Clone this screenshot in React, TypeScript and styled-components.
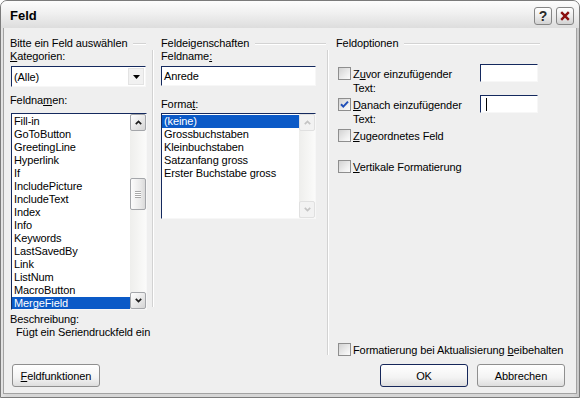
import { type ReactNode } from "react";
import styled, { createGlobalStyle } from "styled-components";

const uiFont = `"Liberation Sans", Arial, sans-serif`;

const GlobalStyle = createGlobalStyle`
  html, body {
    margin: 0;
    padding: 0;
    background: #ffffff;
  }
  body {
    font-family: ${uiFont};
    font-size: 11px;
    letter-spacing: -0.1px;
    color: #000000;
  }
`;

const fieldNames = [
  "Fill-in",
  "GoToButton",
  "GreetingLine",
  "Hyperlink",
  "If",
  "IncludePicture",
  "IncludeText",
  "Index",
  "Info",
  "Keywords",
  "LastSavedBy",
  "Link",
  "ListNum",
  "MacroButton",
  "MergeField"
];

const formats = [
  "(keine)",
  "Grossbuchstaben",
  "Kleinbuchstaben",
  "Satzanfang gross",
  "Erster Buchstabe gross"
];

function Chevron({ up, disabled }: { up: boolean; disabled?: boolean }) {
  return (
    <svg width="7" height="5" viewBox="0 0 7 5">
      <path
        d={up ? "M0.8 4.2 L3.5 1.4 L6.2 4.2" : "M0.8 0.8 L3.5 3.6 L6.2 0.8"}
        fill="none"
        stroke={disabled ? "#c4c4c4" : "#1e1e1e"}
        strokeWidth="1.7"
      />
    </svg>
  );
}

interface ListBoxProps {
  items: string[];
  selected: number;
  width: number;
  height: number;
  thumbTop?: number;
  thumbHeight?: number;
  disabled?: boolean;
}

function ListBox({ items, selected, width, height, thumbTop, thumbHeight, disabled }: ListBoxProps) {
  return (
    <ListFrame $width={width} $height={height}>
      <ListItems>
        {items.map((item, i) => (
          <ListItem key={item} $selected={i === selected}>
            {item}
          </ListItem>
        ))}
      </ListItems>
      <ScrollBar>
        <ScrollButton $disabled={disabled}>
          <Chevron up disabled={disabled} />
        </ScrollButton>
        <ScrollTrack>
          {!disabled && (
            <Thumb style={{ marginTop: thumbTop, height: thumbHeight }}>
              <Grip />
            </Thumb>
          )}
        </ScrollTrack>
        <ScrollButton $disabled={disabled}>
          <Chevron up={false} disabled={disabled} />
        </ScrollButton>
      </ScrollBar>
    </ListFrame>
  );
}

function CheckBox({ checked, offset }: { checked?: boolean; offset: number }) {
  return (
    <Box $offset={offset}>
      {checked && (
        <svg width="11" height="11" viewBox="0 0 11 11">
          <path d="M2 5.2 L4.3 7.6 L9 2.6" fill="none" stroke="#2150b8" strokeWidth="2" />
        </svg>
      )}
    </Box>
  );
}

function Option({ children, checked, field, caret }: {
  children: ReactNode;
  checked?: boolean;
  field?: boolean;
  caret?: boolean;
}) {
  const offset = field ? 3 : 0;
  return (
    <OptionRow>
      <CheckBox checked={checked} offset={offset} />
      <OptionLabel $fixed={field} $offset={offset}>
        {children}
      </OptionLabel>
      {field && <SmallField>{caret && <Caret />}</SmallField>}
    </OptionRow>
  );
}

function GroupHeader({ title, indent }: { title: string; indent: number }) {
  return (
    <GroupHead $indent={indent}>
      <span>{title}</span>
      <Rule />
    </GroupHead>
  );
}

export default function App() {
  return (
    <>
      <GlobalStyle />
      <Window>
        <TitleBar>
          <Title>Feld</Title>
          <CaptionButtons>
            <CaptionButton>?</CaptionButton>
            <CaptionButton>
              <svg width="10" height="10" viewBox="0 0 10 10">
                <path d="M1.2 1.2 L8.8 8.8 M8.8 1.2 L1.2 8.8" stroke="#8c0f0f" strokeWidth="2.4" />
              </svg>
            </CaptionButton>
          </CaptionButtons>
        </TitleBar>

        <Body>
          <Main>
            <LeftGroup>
              <GroupHeader title="Bitte ein Feld auswählen" indent={0} />
              <Label>
                <u>K</u>ategorien:
              </Label>
              <Combo>
                <ComboText>(Alle)</ComboText>
                <DropButton>
                  <svg width="7" height="4" viewBox="0 0 7 4">
                    <path d="M0 0 H7 L3.5 4 Z" fill="#000" />
                  </svg>
                </DropButton>
              </Combo>
              <Label $gap={7}>
                Feldna<u>m</u>en:
              </Label>
              <ListSlot $gap={6} $indent={1}>
                <ListBox items={fieldNames} selected={14} width={136} height={197} thumbTop={47} thumbHeight={32} />
              </ListSlot>
              <Label $gap={3}>Beschreibung:</Label>
              <Description>Fügt ein Seriendruckfeld ein</Description>
            </LeftGroup>

            <MidGroup>
              <GroupHeader title="Feldeigenschaften" indent={9} />
              <GroupBody $height={257} $pad={8}>
                <Label>
                  Feldname<u>:</u>
                </Label>
                <TextField>Anrede</TextField>
                <Label $gap={12}>
                  Forma<u>t</u>:
                </Label>
                <ListSlot $gap={2}>
                  <ListBox items={formats} selected={0} width={155} height={106} disabled />
                </ListSlot>
              </GroupBody>
            </MidGroup>

            <RightGroup>
              <GroupHeader title="Feldoptionen" indent={9} />
              <GroupBody $height={305} $pad={10}>
                <OptionList>
                  <Option field>
                    Z<u>u</u>vor einzufügender
                    <br />
                    Text:
                  </Option>
                  <Option field checked caret>
                    <u>D</u>anach einzufügender
                    <br />
                    Text:
                  </Option>
                  <Option>
                    <u>Z</u>ugeordnetes Feld
                  </Option>
                  <Option>
                    <u>V</u>ertikale Formatierung
                  </Option>
                </OptionList>
                <BottomOption>
                  <Option>
                    Formatierung bei Aktualisierung <u>b</u>eibehalten
                  </Option>
                </BottomOption>
              </GroupBody>
            </RightGroup>
          </Main>

          <Footer>
            <PushButton>
              <u>F</u>eldfunktionen
            </PushButton>
            <ButtonPair>
              <PushButton $default>OK</PushButton>
              <PushButton>Abbrechen</PushButton>
            </ButtonPair>
          </Footer>
        </Body>
      </Window>
    </>
  );
}

const Window = styled.div`
  width: 580px;
  height: 398px;
  box-sizing: border-box;
  display: flex;
  flex-direction: column;
  border: 1px solid #7b7b7b;
  border-radius: 7px 7px 0 0;
  background: linear-gradient(90deg, #e4e4e4, #d6d6d6 1%, #d6d6d6 99%, #c8c8c8);
  overflow: hidden;
`;

const TitleBar = styled.div`
  height: 27px;
  flex: none;
  display: flex;
  align-items: center;
  justify-content: space-between;
  padding: 0 5px 0 9px;
  background: linear-gradient(#fdfdfd, #f0f0f0 45%, #dddddd);
`;

const Title = styled.span`
  font-size: 13px;
  font-weight: bold;
  letter-spacing: 0;
  color: #000000;
  padding-top: 1px;
`;

const CaptionButtons = styled.div`
  display: flex;
  gap: 4px;
  padding-top: 2px;
`;

const CaptionButton = styled.div`
  width: 18px;
  height: 18px;
  box-sizing: border-box;
  display: flex;
  align-items: center;
  justify-content: center;
  border: 1px solid #858585;
  border-radius: 3px;
  background: linear-gradient(#ffffff, #ececec 50%, #d2d2d2);
  font-size: 14px;
  font-weight: bold;
  color: #2a2a2a;
`;

const Body = styled.div`
  flex: 1;
  display: flex;
  flex-direction: column;
  margin: 0 2px 3px 2px;
  border: 1px solid #a2a2a2;
  border-top: none;
  background: #efefef;
  padding: 8px 0 0 6px;
`;

const Main = styled.div`
  display: flex;
  height: 320px;
`;

const LeftGroup = styled.div`
  width: 137px;
  display: flex;
  flex-direction: column;
`;

const MidGroup = styled.div`
  width: 175px;
  margin-left: 5px;
  display: flex;
  flex-direction: column;
`;

const RightGroup = styled.div`
  width: 214px;
  display: flex;
  flex-direction: column;
`;

const GroupHead = styled.div<{ $indent: number }>`
  height: 14px;
  display: flex;
  align-items: center;
  padding-left: ${({ $indent }) => $indent}px;
  white-space: nowrap;
`;

const Rule = styled.div`
  flex: 1;
  height: 1px;
  margin: 1px 1px 0 6px;
  background: #d3d3d3;
  box-shadow: 0 1px 0 #ffffff;
`;

const GroupBody = styled.div<{ $height: number; $pad: number }>`
  height: ${({ $height }) => $height}px;
  display: flex;
  flex-direction: column;
  border-left: 1px solid #d2d2d2;
  box-shadow: inset 1px 0 0 #ffffff;
  padding-left: ${({ $pad }) => $pad}px;
`;

const Label = styled.div<{ $gap?: number }>`
  height: 13px;
  line-height: 13px;
  margin-top: ${({ $gap = 0 }) => $gap}px;
  white-space: nowrap;
`;

const Description = styled.div`
  height: 13px;
  line-height: 13px;
  padding-left: 6px;
  white-space: nowrap;
`;

const sunken = `
  box-sizing: border-box;
  border: 1px solid;
  border-color: #14295e #f7f7f7 #f7f7f7 #14295e;
  background: #ffffff;
`;

const Combo = styled.div`
  ${sunken};
  width: 135px;
  height: 21px;
  margin: 3px 0 0 1px;
  display: flex;
  align-items: center;
  justify-content: space-between;
`;

const ComboText = styled.span`
  padding-left: 2px;
`;

const DropButton = styled.div`
  width: 16px;
  height: 17px;
  box-sizing: border-box;
  margin-right: 1px;
  display: flex;
  align-items: center;
  justify-content: center;
  border: 1px solid #e3e3e3;
  background: #f1f1f1;
`;

const TextField = styled.div`
  ${sunken};
  width: 155px;
  height: 20px;
  margin-top: 3px;
  padding-left: 2px;
  line-height: 18px;
`;

const ListSlot = styled.div<{ $gap: number; $indent?: number }>`
  margin-top: ${({ $gap }) => $gap}px;
  margin-left: ${({ $indent = 0 }) => $indent}px;
`;

const ListFrame = styled.div<{ $width: number; $height: number }>`
  ${sunken};
  width: ${({ $width }) => $width}px;
  height: ${({ $height }) => $height}px;
  display: flex;
`;

const ListItems = styled.div`
  flex: 1;
  padding-top: 1px;
  overflow: hidden;
`;

const ListItem = styled.div<{ $selected: boolean }>`
  height: 13px;
  line-height: 13px;
  padding-left: 2px;
  white-space: nowrap;
  color: ${({ $selected }) => ($selected ? "#ffffff" : "#000000")};
  background: ${({ $selected }) => ($selected ? "#0b5ac7" : "transparent")};
`;

const ScrollBar = styled.div`
  width: 16px;
  display: flex;
  flex-direction: column;
  background: linear-gradient(90deg, #eeeeec, #fbfbfa);
`;

const ScrollButton = styled.div<{ $disabled?: boolean }>`
  height: 17px;
  flex: none;
  box-sizing: border-box;
  display: flex;
  align-items: center;
  justify-content: center;
  border: 1px solid ${({ $disabled }) => ($disabled ? "#e0e0e0" : "#a4a6aa")};
  border-radius: 2px;
  background: ${({ $disabled }) =>
    $disabled ? "#f2f2f2" : "linear-gradient(135deg, #ffffff, #e6e6e6 60%, #d4d4d4)"};
`;

const ScrollTrack = styled.div`
  flex: 1;
  display: flex;
  flex-direction: column;
`;

const Thumb = styled.div`
  box-sizing: border-box;
  display: flex;
  align-items: center;
  justify-content: center;
  border: 1px solid #a4a6aa;
  border-radius: 2px;
  background: linear-gradient(90deg, #fcfcfc, #e8e8e8 70%, #dadada);
`;

const Grip = styled.div`
  width: 6px;
  height: 7px;
  background: repeating-linear-gradient(#a8a8a8 0 1px, #ffffff 1px 2px);
`;

const OptionList = styled.div`
  display: flex;
  flex-direction: column;
  margin-top: 14px;

  & > :nth-child(3) {
    margin-top: 3px;
  }
  & > :nth-child(4) {
    margin-top: 17px;
  }
`;

const BottomOption = styled.div`
  margin-top: auto;
  margin-bottom: -2px;
`;

const OptionRow = styled.div`
  display: flex;
  align-items: flex-start;
`;

const Box = styled.div<{ $offset: number }>`
  width: 13px;
  height: 13px;
  flex: none;
  box-sizing: border-box;
  margin-top: ${({ $offset }) => $offset}px;
  display: flex;
  align-items: center;
  justify-content: center;
  border: 1px solid #8e8e8e;
  background: linear-gradient(135deg, #d2d2d2, #f1f1f1 70%, #fbfbfb);
`;

const OptionLabel = styled.div<{ $fixed?: boolean; $offset: number }>`
  width: ${({ $fixed }) => ($fixed ? "127px" : "auto")};
  margin-top: ${({ $offset }) => $offset}px;
  padding-left: 2px;
  line-height: 14px;
  white-space: nowrap;
`;

const SmallField = styled.div`
  ${sunken};
  width: 58px;
  height: 18px;
  display: flex;
  align-items: center;
  padding-left: 5px;
`;

const Caret = styled.div`
  width: 1px;
  height: 13px;
  background: #000000;
`;

const Footer = styled.div`
  display: flex;
  align-items: center;
  justify-content: space-between;
  margin-top: 8px;
  padding: 0 11px 0 2px;
`;

const ButtonPair = styled.div`
  display: flex;
  gap: 9px;
`;

const PushButton = styled.div<{ $default?: boolean }>`
  width: 88px;
  height: 23px;
  box-sizing: border-box;
  display: flex;
  align-items: center;
  justify-content: center;
  border: 1px solid ${({ $default }) => ($default ? "#16275a" : "#8f8f8f")};
  border-radius: 3px;
  background: linear-gradient(#ffffff, #f3f3f3 60%, #dedede);
  white-space: nowrap;
`;
